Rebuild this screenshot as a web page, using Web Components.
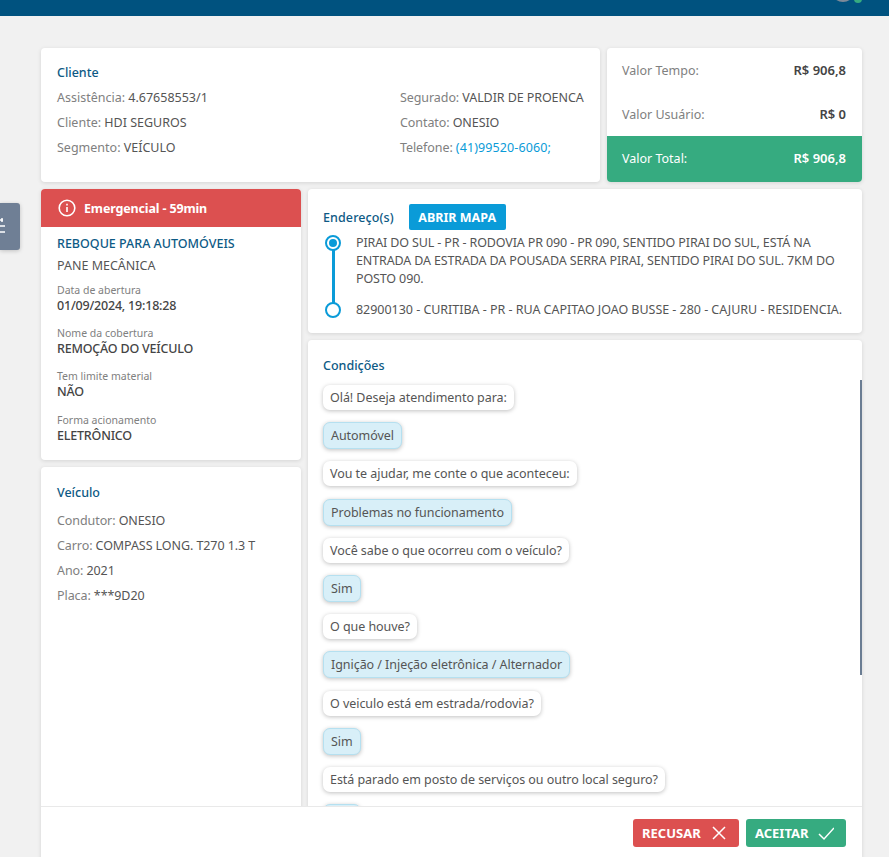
<!DOCTYPE html>
<html lang="pt-BR">
<head>
<meta charset="utf-8">
<title>Atendimento</title>
<style>
  html, body { margin: 0; height: 100%; }
  body { background: #f1f1f1; font-family: "Noto Sans", "Liberation Sans", sans-serif; overflow: hidden; }
</style>
</head>
<body>

<app-page>
  <info-card slot="client" style="--pad: 17px 16px 0 16px">
    <client-info></client-info>
  </info-card>
  <value-card slot="values"></value-card>
  <service-card slot="service"></service-card>
  <vehicle-card slot="vehicle"></vehicle-card>
  <address-card slot="address"></address-card>
  <conditions-card slot="conditions"></conditions-card>
</app-page>

<script>
const FONT = `font-family: "Noto Sans", "Liberation Sans", sans-serif;`;
const CARD = `background:#fff;border-radius:4px;box-shadow:0 1px 4px rgba(0,0,0,.12);box-sizing:border-box;`;
const BLUE = '#0d5a85';

class AppPage extends HTMLElement {
  connectedCallback() {
    this.attachShadow({mode: 'open'}).innerHTML = `
      <style>
        :host { display:block; height:857px; position:relative; overflow:hidden; ${FONT} }
        .bar { height:16px; background:#00527f; position:relative; }
        .avatar { position:absolute; right:34px; top:-22px; width:24px; height:24px; border-radius:50%; background:#7c8a99; }
        .dot { position:absolute; right:27px; top:-5px; width:8px; height:8px; border-radius:50%; background:#36ab80; }
        .main { width:821px; margin:32px 0 0 41px; display:grid; grid-template-columns:260px 292px 255px; grid-template-rows:134px 144px auto; gap:7px; }
        .top { grid-column:1 / 3; display:block; }
        .left { grid-row:2 / 4; display:flex; flex-direction:column; gap:7px; }
        .right { grid-column:2 / 4; grid-row:2 / 4; display:flex; flex-direction:column; gap:7px; }
        .handle { position:absolute; left:0; top:203px; width:20px; height:47px; background:#6f7f95; border-radius:0 3px 3px 0; box-shadow:0 1px 4px rgba(0,0,0,.2); overflow:hidden; }
        .handle svg { position:absolute; left:-13px; top:13px; }
        .foot { position:absolute; left:41px; top:806px; width:821px; height:51px; background:#fff; border-top:1px solid #e9e9e9; box-sizing:border-box; display:flex; justify-content:flex-end; align-items:flex-start; gap:7px; padding:12px 16px 0 0; }
      </style>
      <div class="bar"><span class="avatar"></span><span class="dot"></span></div>
      <div class="main">
        <div class="top"><slot name="client"></slot></div>
        <div><slot name="values"></slot></div>
        <div class="left"><slot name="service"></slot><slot name="vehicle"></slot></div>
        <div class="right"><slot name="address"></slot><slot name="conditions"></slot></div>
      </div>
      <div class="handle"><svg width="18" height="20" viewBox="0 0 18 20" fill="none" stroke="#fff" stroke-width="1.5"><path d="M2 4h14M2 10h16M2 16h16"/><path d="M15 2v4"/></svg></div>
      <div class="foot">
        <action-button style="width:106px" color="#dc5050" label="RECUSAR" icon="x"></action-button>
        <action-button style="width:100px" color="#36ab80" label="ACEITAR" icon="check"></action-button>
      </div>`;
  }
}

class InfoCard extends HTMLElement {
  connectedCallback() {
    this.attachShadow({mode: 'open'}).innerHTML = `
      <style>:host { display:block; height:134px; padding:var(--pad); ${CARD} }</style><slot></slot>`;
  }
}

class ClientInfo extends HTMLElement {
  connectedCallback() {
    this.attachShadow({mode: 'open'}).innerHTML = `
      <style>
        :host { display:block; font-size:12.5px; color:#555; }
        h3 { margin:0; font-size:12.5px; font-weight:500; color:${BLUE}; line-height:16px; }
        .cols { display:flex; justify-content:space-between; margin-top:9px; }
        .r { width:184px; letter-spacing:-.08px; }
        p { margin:0 0 9px; line-height:16px; white-space:nowrap; }
        .k { color:#808080; }
        a { color:#0a9bd8; text-decoration:none; letter-spacing:.1px; }
      </style>
      <h3>Cliente</h3>
      <div class="cols">
        <div>
          <p><span class="k">Assistência:</span> 4.67658553/1</p>
          <p><span class="k">Cliente:</span> HDI SEGUROS</p>
          <p><span class="k">Segmento:</span> VEÍCULO</p>
        </div>
        <div class="r">
          <p><span class="k">Segurado:</span> VALDIR DE PROENCA</p>
          <p><span class="k">Contato:</span> ONESIO</p>
          <p><span class="k">Telefone:</span> <a>(41)99520-6060;</a></p>
        </div>
      </div>`;
  }
}

class ValueCard extends HTMLElement {
  connectedCallback() {
    this.attachShadow({mode: 'open'}).innerHTML = `
      <style>
        :host { display:flex; flex-direction:column; height:134px; overflow:hidden; font-size:12.5px; ${CARD} }
        .row { display:flex; justify-content:space-between; padding:0 16px 0 15px; color:#808080; align-items:center; height:44px; }
        .row:first-child { padding-top:4px; box-sizing:content-box; height:42px; }
        b { color:#444; font-weight:600; font-size:13px; }
        .total { background:#36ab80; color:#fff; height:46px; margin-top:auto; padding-bottom:2px; box-sizing:border-box; }
        .total b { color:#fff; }
      </style>
      <div class="row"><span>Valor Tempo:</span><b>R$ 906,8</b></div>
      <div class="row"><span>Valor Usuário:</span><b>R$ 0</b></div>
      <div class="row total"><span>Valor Total:</span><b>R$ 906,8</b></div>`;
  }
}

class ServiceCard extends HTMLElement {
  connectedCallback() {
    this.attachShadow({mode: 'open'}).innerHTML = `
      <style>
        :host { display:block; height:271px; overflow:hidden; font-size:12.5px; color:#555; ${CARD} }
        .alert { height:38px; background:#dc5050; color:#fff; font-weight:700; display:flex; align-items:center; gap:8px; padding-left:17px; font-size:12.5px; letter-spacing:-.15px; }
        .body { padding:9px 16px; }
        h3 { margin:0; font-size:12.5px; font-weight:500; color:${BLUE}; line-height:16px; }
        .sub { line-height:16px; margin:6px 0 8px; }
        small { display:block; font-size:10.5px; color:#808080; line-height:16px; }
        b { display:block; font-weight:500; color:#444; line-height:16px; margin-bottom:11.2px; letter-spacing:-.2px; }
      </style>
      <div class="alert">
        <svg width="18" height="18" viewBox="0 0 18 18" fill="none" stroke="#fff" stroke-width="1.6"><circle cx="9" cy="9" r="7.8"/><path d="M9 8v5M9 4.8v1.6"/></svg>
        Emergencial - 59min
      </div>
      <div class="body">
        <h3>REBOQUE PARA AUTOMÓVEIS</h3>
        <div class="sub">PANE MECÂNICA</div>
        <small>Data de abertura</small><b>01/09/2024, 19:18:28</b>
        <small>Nome da cobertura</small><b>REMOÇÃO DO VEÍCULO</b>
        <small>Tem limite material</small><b>NÃO</b>
        <small>Forma acionamento</small><b>ELETRÔNICO</b>
      </div>`;
  }
}

class VehicleCard extends HTMLElement {
  connectedCallback() {
    this.attachShadow({mode: 'open'}).innerHTML = `
      <style>
        :host { display:block; height:400px; padding:18px 16px; font-size:12.5px; color:#555; ${CARD} }
        h3 { margin:0 0 12px; font-size:12.5px; font-weight:500; color:${BLUE}; line-height:16px; }
        p { margin:0 0 9px; line-height:16px; white-space:nowrap; letter-spacing:-.08px; }
        .k { color:#808080; }
      </style>
      <h3>Veículo</h3>
      <p><span class="k">Condutor:</span> ONESIO</p>
      <p><span class="k">Carro:</span> COMPASS LONG. T270 1.3 T</p>
      <p><span class="k">Ano:</span> 2021</p>
      <p><span class="k">Placa:</span> ***9D20</p>`;
  }
}

class AddressCard extends HTMLElement {
  connectedCallback() {
    this.attachShadow({mode: 'open'}).innerHTML = `
      <style>
        :host { display:block; height:144px; padding:15px 16px 0 15px; font-size:12.5px; color:#555; ${CARD} }
        .head { display:flex; align-items:center; gap:15px; height:26px; }
        h3 { margin:0; font-size:12.5px; font-weight:500; color:${BLUE}; letter-spacing:.1px; }
        button { ${FONT} border:0; background:#0a9bd8; color:#fff; font-weight:700; font-size:12.5px; height:26px; width:97px; padding:0; border-radius:2px; }
        .stops { display:grid; grid-template-columns:18px 1fr; column-gap:15px; margin-top:4px; }
        p { margin:0; line-height:18px; }
        .first { letter-spacing:-.13px; }
        .last { letter-spacing:-.03px; }
        .dotcol { position:relative; left:1px; }
        .line { position:absolute; left:8px; top:11px; bottom:-3px; width:3px; background:#0a9bd8; }
        .d { position:absolute; left:1px; top:1px; width:16px; height:16px; box-sizing:border-box; border:2px solid #0a9bd8; border-radius:50%; background:#fff; }
        .d.on::after { content:""; position:absolute; left:2px; top:2px; width:8px; height:8px; border-radius:50%; background:#0a9bd8; }
        .gap { margin-bottom:13px; }
      </style>
      <div class="head"><h3>Endereço(s)</h3><button>ABRIR MAPA</button></div>
      <div class="stops">
        <div class="dotcol"><span class="line"></span><span class="d on"></span></div>
        <p class="gap first">PIRAI DO SUL - PR - RODOVIA PR 090 - PR 090, SENTIDO PIRAI DO SUL, ESTÁ NA ENTRADA DA ESTRADA DA POUSADA SERRA PIRAI, SENTIDO PIRAI DO SUL. 7KM DO POSTO 090.</p>
        <div class="dotcol"><span class="d"></span></div>
        <p class="last">82900130 - CURITIBA - PR - RUA CAPITAO JOAO BUSSE - 280 - CAJURU - RESIDENCIA.</p>
      </div>`;
  }
}

class ChatBubble extends HTMLElement {
  connectedCallback() {
    this.attachShadow({mode: 'open'}).innerHTML = `
      <style>
        :host { display:block; width:fit-content; box-sizing:border-box; height:25px; line-height:25px; padding:0 7px; border-radius:7px; background:#fff; font-size:12.5px; letter-spacing:-.05px; color:#555; box-shadow:0 1px 4px rgba(0,0,0,.25); white-space:nowrap; }
        :host([answer]) { height:27px; line-height:25px; padding:0 7px; background:#d8eff8; border:1px solid #b5e0f0; color:#555; }
      </style><slot></slot>`;
  }
}

class ConditionsCard extends HTMLElement {
  connectedCallback() {
    this.attachShadow({mode: 'open'}).innerHTML = `
      <style>
        :host { display:block; height:520px; position:relative; padding:18px 16px 0 15px; ${CARD} }
        h3 { margin:0 0 11px; font-size:12.5px; font-weight:500; color:${BLUE}; line-height:16px; }
        .list { display:flex; flex-direction:column; gap:12.2px; }
        .bar { position:absolute; right:0; top:40px; width:2px; height:295px; background:#6b7d93; }
      </style>
      <h3>Condições</h3>
      <div class="list">
        <chat-bubble>Olá! Deseja atendimento para:</chat-bubble>
        <chat-bubble answer>Automóvel</chat-bubble>
        <chat-bubble>Vou te ajudar, me conte o que aconteceu:</chat-bubble>
        <chat-bubble answer>Problemas no funcionamento</chat-bubble>
        <chat-bubble>Você sabe o que ocorreu com o veículo?</chat-bubble>
        <chat-bubble answer>Sim</chat-bubble>
        <chat-bubble>O que houve?</chat-bubble>
        <chat-bubble answer>Ignição / Injeção eletrônica / Alternador</chat-bubble>
        <chat-bubble>O veiculo está em estrada/rodovia?</chat-bubble>
        <chat-bubble answer>Sim</chat-bubble>
        <chat-bubble>Está parado em posto de serviços ou outro local seguro?</chat-bubble>
        <chat-bubble answer>Sim</chat-bubble>
      </div>
      <span class="bar"></span>`;
  }
}

class ActionButton extends HTMLElement {
  connectedCallback() {
    const c = this.getAttribute('color');
    const path = this.getAttribute('icon') === 'x' ? 'M2 2l12 12M14 2L2 14' : 'M1 9l5 5L16 3';
    this.attachShadow({mode: 'open'}).innerHTML = `
      <style>
        :host { display:inline-flex; align-items:center; justify-content:space-between; box-sizing:border-box; height:28px; padding:0 12px 0 9px; background:${c}; color:#fff; border-radius:3px; font-weight:700; font-size:13px; ${FONT} }
      </style>
      <span>${this.getAttribute('label')}</span>
      <svg width="16" height="16" viewBox="0 0 16 16" fill="none" stroke="#fff" stroke-width="1.5"><path d="${path}"/></svg>`;
  }
}

customElements.define('app-page', AppPage);
customElements.define('info-card', InfoCard);
customElements.define('client-info', ClientInfo);
customElements.define('value-card', ValueCard);
customElements.define('service-card', ServiceCard);
customElements.define('vehicle-card', VehicleCard);
customElements.define('address-card', AddressCard);
customElements.define('chat-bubble', ChatBubble);
customElements.define('conditions-card', ConditionsCard);
customElements.define('action-button', ActionButton);
</script>
</body>
</html>
